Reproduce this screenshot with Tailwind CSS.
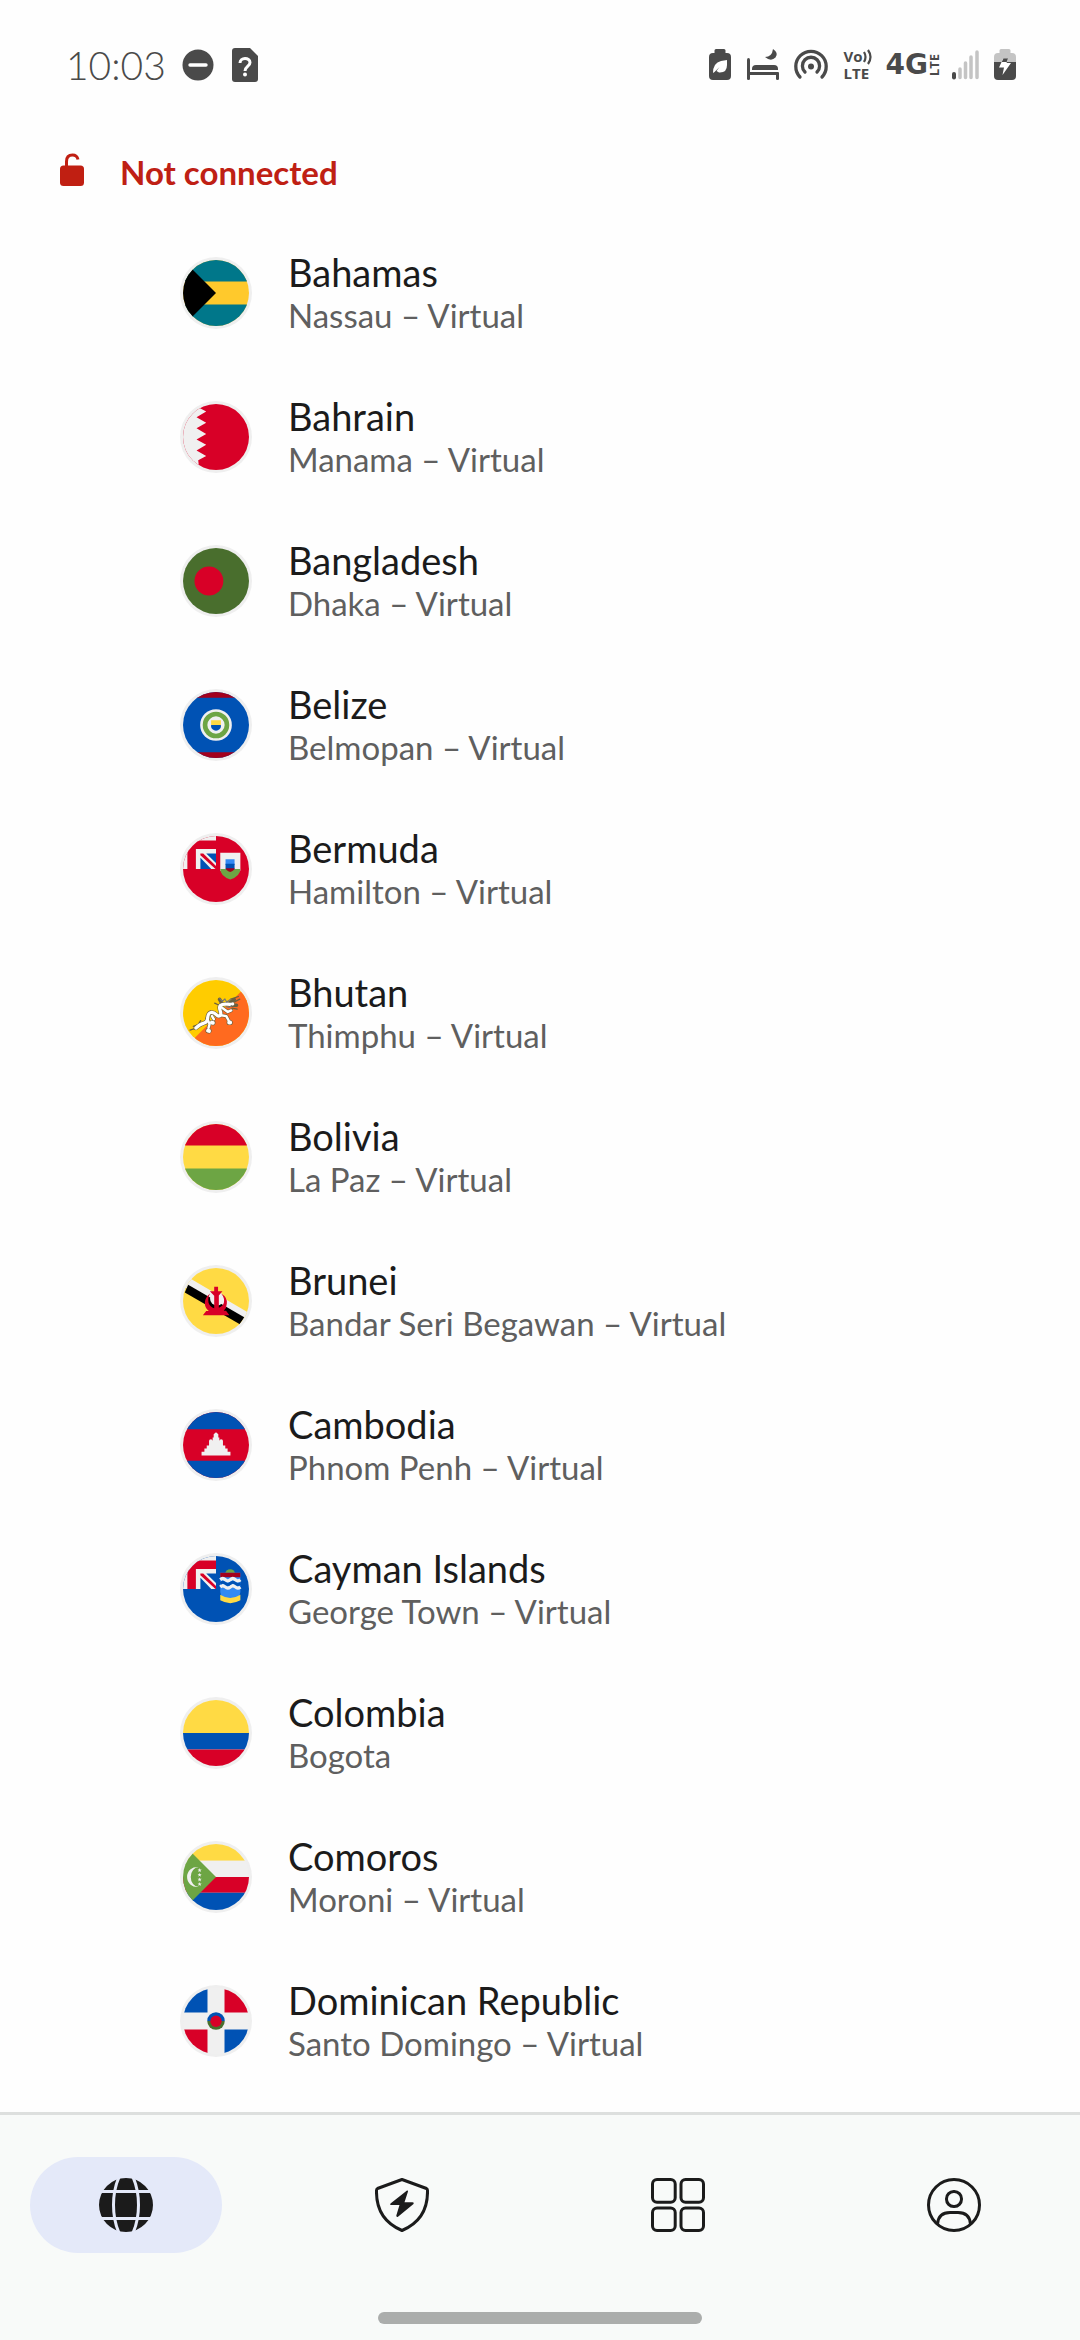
<!DOCTYPE html>
<html lang="en">

<head>
    <meta charset="UTF-8">
    <meta name="viewport" content="width=device-width, initial-scale=1.0">
    <title>Locations</title>
    <script src="https://cdn.jsdelivr.net/npm/@tailwindcss/browser@4"></script>
</head>

<body class="bg-[#fefefe] text-[#1b1b1b] font-['Lato',sans-serif] min-h-screen flex flex-col">

    <!-- status bar -->
    <div class="flex items-center justify-between h-[130px] pl-[66px] pr-16 text-[#4a4a4a]">
        <div class="flex items-center">
            <span class="text-[39px] leading-none font-light">10:03</span>
            <svg class="w-8 h-8 ml-4" viewBox="0 0 32 32">
                <circle cx="16" cy="16" r="15.5" fill="#4a4a4a"/>
                <path d="M8 16h16" stroke="#fff" stroke-width="3.4" stroke-linecap="round"/>
            </svg>
            <svg class="w-[26px] h-[34px] ml-[18px]" viewBox="0 0 26 34">
                <path d="M3 0h15l8 8v23a3 3 0 0 1-3 3H3a3 3 0 0 1-3-3V3a3 3 0 0 1 3-3z" fill="#4a4a4a"/>
                <path d="M8 15c0-6 10-6 10-.5 0 4-5 4-5 8.500" fill="none" stroke="#fff" stroke-width="3"/>
                <circle cx="13" cy="26.500" r="2" fill="#fff"/>
            </svg>
        </div>
        <div class="flex items-center">
            <svg class="w-[22px] h-8" viewBox="0 0 22 32">
                <path d="M7 0h8q1.500 0 1.500 1.500V4H18q4 0 4 4v19q0 4-4 4H4q-4 0-4-4V8q0-4 4-4h1.500V1.500Q5.500 0 7 0z" fill="#4a4a4a"/>
                <path d="M4 24q0-10 8-12l6-1v5q0 8-8 7.500L7.500 22l3-4-5 5z" fill="#fff"/>
            </svg>
            <svg class="w-8 h-8 ml-4" viewBox="0 0 32 32" fill="#4a4a4a">
                <path d="M0 11q0-2 1.500-2T3 11v12h28q1 0 1 1v6q0 1-1.500 1T29 30v-4H3v4q0 1-1.500 1T0 30z"/>
                <path d="M5 21v-1q0-4 4-4h18q4 0 4 4v1z"/>
                <path d="M26 0q6 4 2.500 8.500Q24 13 18 8q7 0 8-8z"/>
            </svg>
            <svg class="w-[34px] h-8 ml-[15px]" viewBox="0 0 34 32" fill="none" stroke="#4a4a4a" stroke-width="3.300" stroke-linecap="round">
                <path d="M6 28A15.200 15.200 0 1 1 28 28"/>
                <path d="M11 23A8.600 8.600 0 1 1 23 23"/>
                <circle cx="17" cy="17.500" r="3" fill="#4a4a4a" stroke="none"/>
            </svg>
            <div class="ml-4 w-8 flex flex-col font-['Open_Sans',sans-serif] font-bold text-[15px] leading-[17px] whitespace-nowrap">
                <span class="flex items-center">Vo<svg class="w-[10px] h-4" viewBox="0 0 10 16" fill="none" stroke="#4a4a4a" stroke-width="2.200"><path d="M1 3q3 5 0 10M5 1q5 7 0 14"/></svg></span>
                <span>LTE</span>
            </div>
            <div class="ml-[10px] flex items-center">
                <span class="font-['DejaVu_Sans',sans-serif] font-bold text-[28px] leading-8">4G</span>
                <span class="[writing-mode:vertical-rl] rotate-180 font-['Open_Sans',sans-serif] font-bold text-[13px] leading-3">LTE</span>
            </div>
            <svg class="w-[27px] h-[30px] ml-3" viewBox="0 0 27 30" stroke-width="4" stroke-linecap="round">
                <path d="M2 24v3.500" stroke="#4a4a4a"/>
                <path d="M8 19v8.500M13.500 13v14.500M19 7v20.500M25 2v25.500" stroke="#c4c4c4" stroke-width="3.500"/>
            </svg>
            <svg class="w-[22px] h-8 ml-[15px]" viewBox="0 0 22 32">
                <path d="M7 0h8q1.500 0 1.500 1.500V4H18q4 0 4 4v6H0V8q0-4 4-4h1.500V1.500Q5.500 0 7 0z" fill="#c4c4c4"/>
                <path d="M0 13h22v14q0 4-4 4H4q-4 0-4-4z" fill="#4a4a4a"/>
                <path d="M9 10h5l-1.500 4H17l-8.500 12 1.500-7.500H5z" fill="#fff"/>
                <path d="M9.500 9.500h4.500l-1.300 3.500h-5z" fill="#4a4a4a"/>
            </svg>
        </div>
    </div>

    <!-- connection state -->
    <div class="flex items-center h-[91px] pb-2 pl-[60px] gap-9 text-[#bf2014]">
        <svg class="w-6 h-[34px] mb-1" viewBox="0 0 24 34">
            <rect x="0" y="12.500" width="24" height="20.500" rx="3.500" fill="#c01f12"/>
            <path d="M6.500 14V8.500Q6.500 2 12.500 2 17 2 18 6.500" fill="none" stroke="#c01f12" stroke-width="3"/>
        </svg>
        <span class="text-[33px] leading-10 font-bold">Not connected</span>
    </div>

    <ul id="list" class="flex flex-col"></ul>

    <!-- bottom navigation -->
    <nav class="mt-auto h-[228px] bg-[#f8faf9] border-t-3 border-[#dddfde] flex flex-col items-center justify-between pt-[42px] pb-4">
        <div class="grid grid-cols-4 gap-6 w-full">
            <button aria-label="Locations" class="mx-[30px] h-24 rounded-full bg-[#e4e9f9] flex items-center justify-center">
                <svg class="w-[54px] h-[54px]" viewBox="0 0 54 54">
                    <circle cx="27" cy="27" r="27" fill="#1b1b1b"/>
                    <path d="M0 13.500h54M0 40.500h54M20.500-2c-8 17-8 41 0 58M33.500-2c8 17 8 41 0 58" fill="none" stroke="#e4e9f9" stroke-width="3"/>
                </svg>
            </button>
            <button aria-label="Protection" class="mx-[30px] h-24 rounded-full flex items-center justify-center">
                <svg class="w-[54px] h-[54px]" viewBox="0 0 54 54">
                    <path d="M27 1.500 51.500 10.500Q52.500 11 52.500 12.500C53 36 40 47 27 52.500 14 47 1 36 1.500 12.500q0-1.500 1-2z" fill="none" stroke="#1b1b1b" stroke-width="3" stroke-linejoin="round"/>
                    <path d="M32 12.500 15.500 25.500q-1 1.500 1 1.500h8l-3.200 10.500q0 2 1.700 1.200L38.500 26q1-1.500-1-1.800h-8L33 13.500q.2-1.300-1-1z" fill="#1b1b1b"/>
                </svg>
            </button>
            <button aria-label="Products" class="mx-[30px] h-24 rounded-full flex items-center justify-center">
                <svg class="w-[54px] h-[54px]" viewBox="0 0 54 54" fill="none" stroke="#1b1b1b" stroke-width="3">
                    <rect x="1.500" y="1.500" width="22.700" height="22.700" rx="4.500"/>
                    <rect x="30" y="1.500" width="22.500" height="22.700" rx="4.500"/>
                    <rect x="1.500" y="30" width="22.700" height="22.500" rx="4.500"/>
                    <rect x="30" y="30" width="22.500" height="22.500" rx="4.500"/>
                </svg>
            </button>
            <button aria-label="Profile" class="mx-[30px] h-24 rounded-full flex items-center justify-center">
                <svg class="w-[54px] h-[54px]" viewBox="0 0 54 54" fill="none" stroke="#1b1b1b" stroke-width="3">
                    <circle cx="27" cy="27" r="25.500"/>
                    <rect x="19.500" y="13.500" width="15" height="15" rx="7.200"/>
                    <path d="M10.500 47V46Q11.500 34.500 23 34.500h8Q42.500 34.500 43.500 46v1"/>
                </svg>
            </button>
        </div>
        <div class="w-[30%] h-3 rounded-full bg-[#abadac]"></div>
    </nav>

    <script>
        // upper left quarter shared by the ensign flags
        function jack(red, blue) {
            return `<path fill="#f0f0f0" d="M-10-10h266v266H-10z"/>
                <path fill="${red}" d="M34 256V115l81-81h141v66H100v156z"/>
                <path fill="${blue}" d="M135 168v88h84zM180 135h76v74z"/>
                <path fill="${red}" d="M135 135h22l99 97v24h-4L135 150z"/>`;
        }

        // flags are drawn on a 512 x 512 canvas and cut to a circle
        const flags = {
            bahamas: `<path fill="#ffc92c" d="M0 0h512v512H0z"/><path fill="#00778a" d="M0 0h512v167H0zM0 345h512v167H0z"/><path fill="#000" d="M0 0v512l256-256z"/>`,
            bahrain: `<path fill="#d80027" d="M0 0h512v512H0z"/><path fill="#f0f0f0" d="M0 0h122l-4 25 62 34-75 44 75 43-75 42 75 44-75 43 75 42-75 43 75 43-62 34 4 35H0z"/>`,
            bangladesh: `<path fill="#496e2d" d="M0 0h512v512H0z"/><circle cx="201" cy="256" r="112" fill="#d80027"/>`,
            belize: `<path fill="#0052b4" d="M0 0h512v512H0z"/><path fill="#a2001d" d="M0 0h512v44H0zM0 468h512v44H0z"/><circle cx="256" cy="256" r="123" fill="#f0f0f0"/><circle cx="256" cy="256" r="85" fill="none" stroke="#6da544" stroke-width="36"/><path fill="#ffda44" d="M218 219h76v37h-76z"/><path fill="#0052b4" d="M218 256h76v15q-4 21-38 30-34-9-38-30z"/>`,
            bermuda: `<path fill="#d80027" d="M0 0h512v512H0z"/>${jack('#d80027', '#0052b4')}<path fill="#f0f0f0" d="M289 130h156v140H289z"/><path fill="#6da544" d="M289 256h156q0 55-78 82-78-27-78-82z"/><path fill="#338af3" d="M330 180h70v44h-70z"/><path fill="#0052b4" d="M330 215h70v42h-70z"/><path fill="#a2001d" d="M332 250h68q0 18-34 29-34-11-34-29z"/>`,
            bhutan: `<path fill="#ffcc00" d="M0 0h512v512H0z"/><path fill="#ff6a1f" d="M512 28 28 512h484z"/>
                <g fill="none" stroke-linecap="round" stroke-linejoin="round">
                <g stroke="#6b6040"><path stroke-width="34" d="M100 372q34-32 62-38c50-5 10-74 55-82 42-6 42 40 68 26 28-18-18-58 4-80 30-24 62-2 96-12"/><path stroke-width="28" d="M188 300l18 42-8 30M225 280l14 24M284 272l52 8 18 34M290 206l58 42 26-12M300 178l-16-28M355 182l42-30M365 196l50 0"/><path stroke-width="40" d="M194 393l8 2M224 330l8 2M358 330l8 0"/><path stroke-width="10" d="M54 388l42-12M80 360l28-10M246 180l30 14M370 148l60-20M380 218l40 8M400 170l40-22M125 335l12-20"/></g>
                <g stroke="#fff"><path stroke-width="25" d="M100 372q34-32 62-38c50-5 10-74 55-82 42-6 42 40 68 26 28-18-18-58 4-80 30-24 62-2 96-12"/><path stroke-width="19" d="M188 300l18 42-8 30M225 280l14 24M284 272l52 8 18 34M290 206l58 42 26-12"/><path stroke-width="30" d="M194 393l8 2M224 330l8 2M358 330l8 0"/></g>
                <path stroke="#777" stroke-width="9" d="M285 145l20 20 20-18 14 24 28-20M335 205l22 8 20-14"/></g>`,
            bolivia: `<path fill="#ffda44" d="M0 0h512v512H0z"/><path fill="#d80027" d="M0 0h512v167H0z"/><path fill="#6da544" d="M0 345h512v167H0z"/>`,
            brunei: `<path fill="#ffda44" d="M0 0h512v512H0z"/><path fill="#f0f0f0" d="M-20 36 532 360v92L-20 128z"/><path fill="#000" d="M40 130 475 382l-34 54L14 190z"/><path fill="#ffda44" d="M-20 128 14 190-20 240z"/>
                <circle cx="264" cy="238" r="54" fill="#f0f0f0"/>
                <path fill="#d80027" d="M242 145h30v35h34l-28 34v94q32-10 40-42 6-34-22-68 50 30 44 80-2 36-24 54h18l26 34H154l26-32h20q-34-26-30-68 2-40 40-68-20 34-12 72 12 34 44 42v-96l-34-36h34z"/>`,
            cambodia: `<path fill="#d80027" d="M0 0h512v512H0z"/><path fill="#0052b4" d="M0 0h512v134H0zM0 378h512v134H0z"/><path fill="#f0f0f0" d="M144 338v-30h22v-24h18v-24h18v-36q0-10 14-12 14 2 14 12v-26h8v-26l18-14 18 14v26h8v26q0-10 14-12 14 2 14 12v36h18v24h18v24h22v30z"/>`,
            cayman: `<path fill="#0052b4" d="M0 0h512v512H0z"/>${jack('#d80027', '#0052b4')}<circle cx="366" cy="140" r="38" fill="#6da544"/><path fill="#338af3" d="M289 130h156v150q0 50-78 68-78-18-78-68z"/><path fill="#a2001d" d="M289 130h156v34H289z"/>
                <path fill="none" stroke="#f0f0f0" stroke-width="25" d="M289 184q20-18 39 0t39 0 39 0 39 0M289 240q20-18 39 0t39 0 39 0 39 0"/><path fill="none" stroke="#0052b4" stroke-width="22" d="M289 212q20-18 39 0t39 0 39 0 39 0"/><path fill="#ffda44" d="M289 300q78 50 156 0v44q-78 44-156 0z"/>`,
            colombia: `<path fill="#ffda44" d="M0 0h512v256H0z"/><path fill="#0052b4" d="M0 256h512v128H0z"/><path fill="#d80027" d="M0 384h512v128H0z"/>`,
            comoros: `<path fill="#ffda44" d="M0 0h512v130H0z"/><path fill="#f0f0f0" d="M0 130h512v126H0z"/><path fill="#d80027" d="M0 256h512v122H0z"/><path fill="#0052b4" d="M0 378h512v134H0z"/><path fill="#6da544" d="M0 0v512l256-256z"/><path fill="#f0f0f0" d="M122 179a78 78 0 1 0 0 154 62 77 0 0 1 0-154z"/><path fill="#f0f0f0" d="M129 187l4 11h12l-9 8 3 12-10-7-10 7 3-12-9-8h12zM129 223l4 11h12l-9 8 3 12-10-7-10 7 3-12-9-8h12zM129 259l4 11h12l-9 8 3 12-10-7-10 7 3-12-9-8h12zM129 295l4 11h12l-9 8 3 12-10-7-10 7 3-12-9-8h12z"/>`,
            dominican: `<path fill="#f0f0f0" d="M0 0h512v512H0z"/><path fill="#0052b4" d="M0 0h190v190H0zM322 322h190v190H322z"/><path fill="#d80027" d="M322 0h190v190H322zM0 322h190v190H0z"/><path fill="#496e2d" d="M188 256a68 68 0 0 0 136 0z"/><path fill="#0052b4" d="M188 256a68 68 0 0 1 136 0z"/><circle cx="256" cy="258" r="44" fill="#d80027"/>`
        };

        const places = [
            ['Bahamas', 'Nassau – Virtual', 'bahamas'],
            ['Bahrain', 'Manama – Virtual', 'bahrain'],
            ['Bangladesh', 'Dhaka – Virtual', 'bangladesh'],
            ['Belize', 'Belmopan – Virtual', 'belize'],
            ['Bermuda', 'Hamilton – Virtual', 'bermuda'],
            ['Bhutan', 'Thimphu – Virtual', 'bhutan'],
            ['Bolivia', 'La Paz – Virtual', 'bolivia'],
            ['Brunei', 'Bandar Seri Begawan – Virtual', 'brunei'],
            ['Cambodia', 'Phnom Penh – Virtual', 'cambodia'],
            ['Cayman Islands', 'George Town – Virtual', 'cayman'],
            ['Colombia', 'Bogota', 'colombia'],
            ['Comoros', 'Moroni – Virtual', 'comoros'],
            ['Dominican Republic', 'Santo Domingo – Virtual', 'dominican']
        ];

        document.getElementById("list").innerHTML = places.map(([country, city, flag]) => `
            <li>
                <button class="w-full h-36 pl-[180px] pr-6 flex items-center gap-9 text-left">
                    <span class="shrink-0 rounded-full bg-[#efefef] p-[3px]">
                        <svg class="w-[66px] h-[66px] rounded-full" viewBox="0 0 512 512">${flags[flag]}</svg>
                    </span>
                    <span class="flex flex-col">
                        <span class="text-[38px] leading-[44px]">${country}</span>
                        <span class="text-[33px] leading-[42px] text-[#5f5f5f]">${city}</span>
                    </span>
                </button>
            </li>`).join("");
    </script>
</body>

</html>
